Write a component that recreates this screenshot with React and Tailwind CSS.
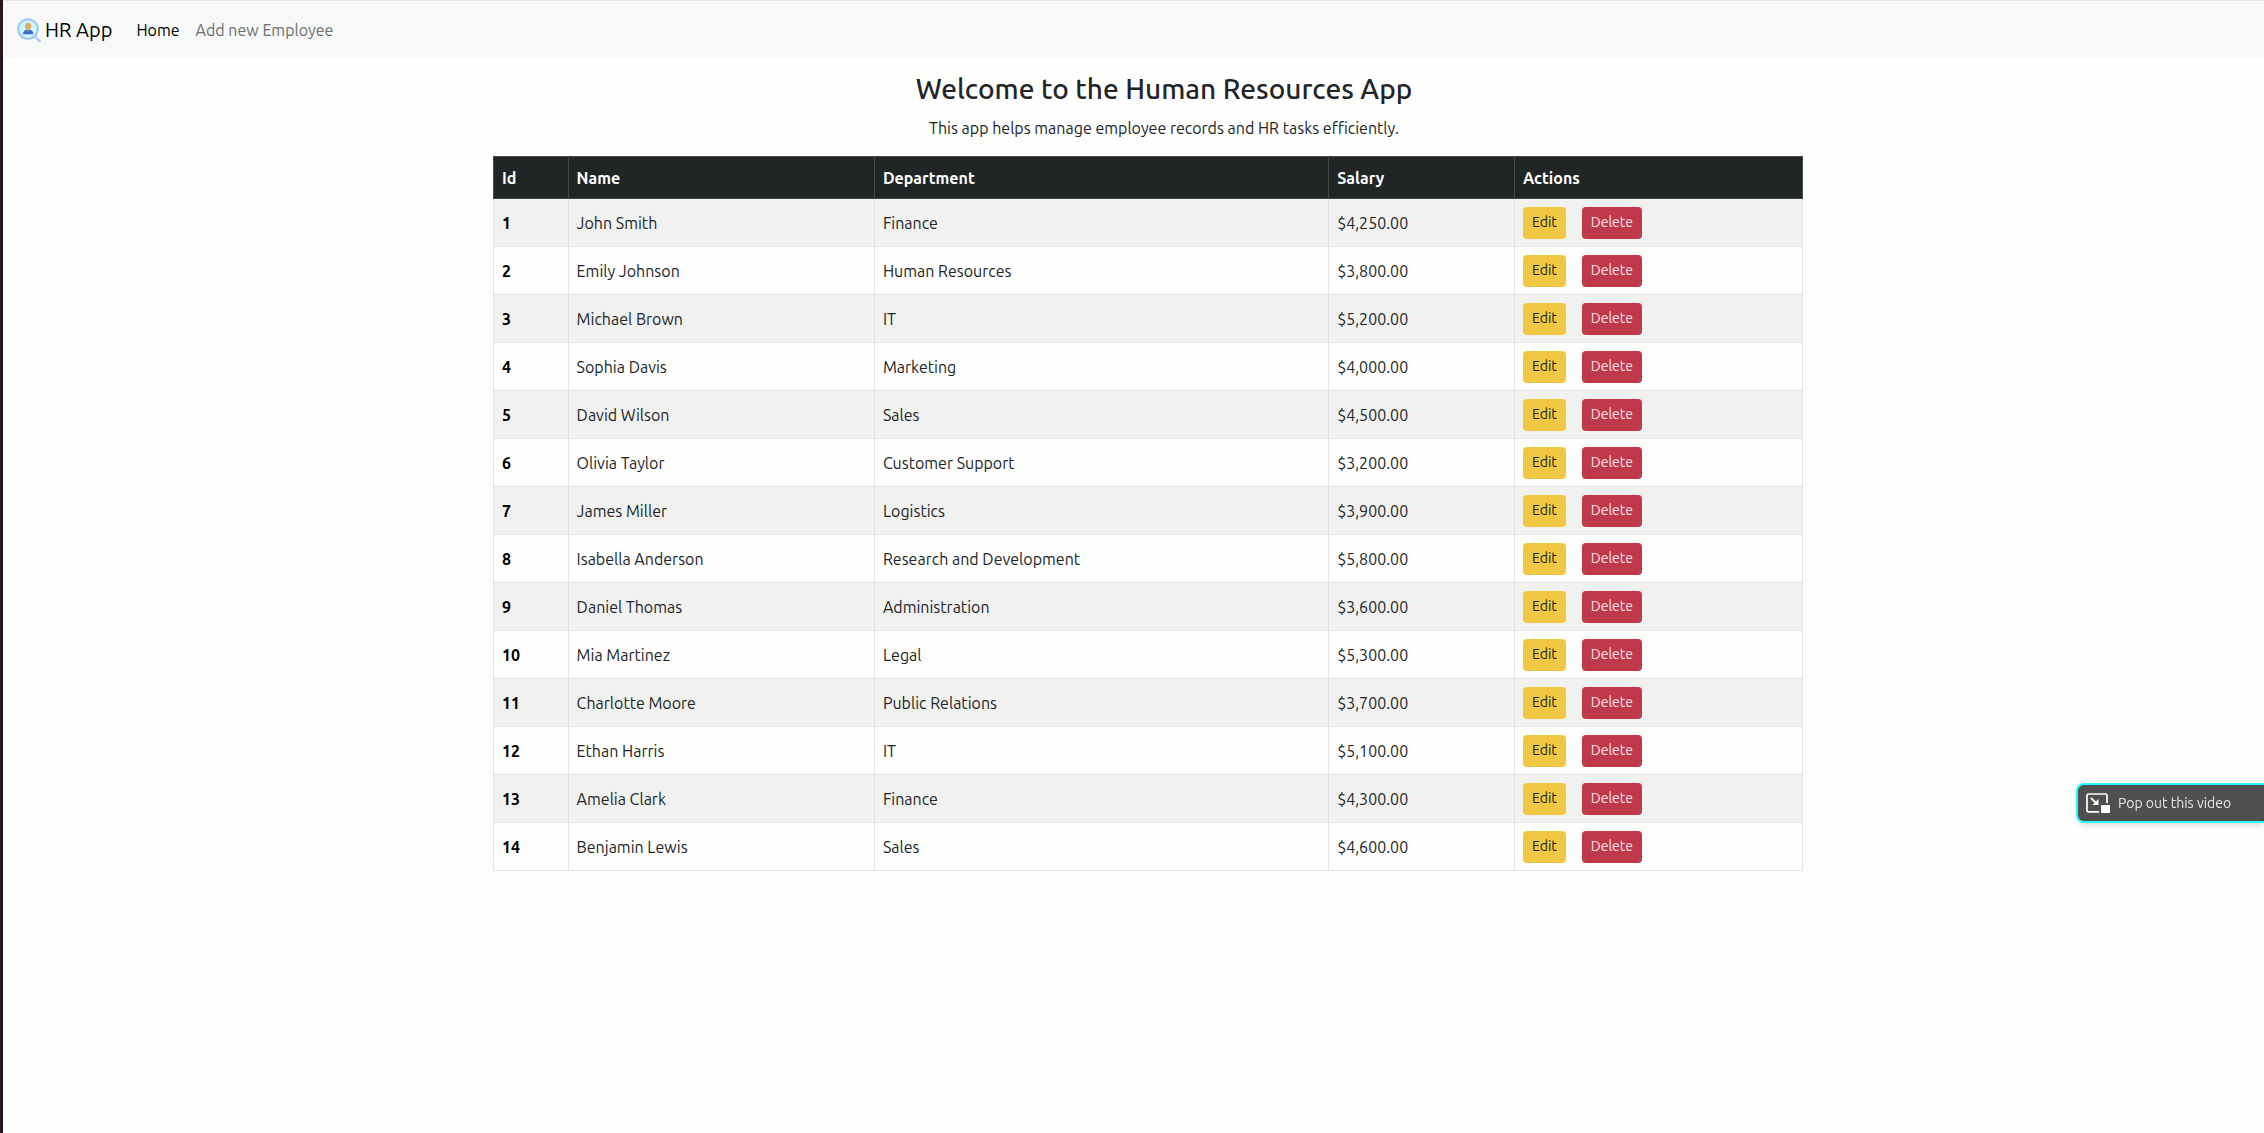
const employees = [
  [1, "John Smith", "Finance", "$4,250.00"],
  [2, "Emily Johnson", "Human Resources", "$3,800.00"],
  [3, "Michael Brown", "IT", "$5,200.00"],
  [4, "Sophia Davis", "Marketing", "$4,000.00"],
  [5, "David Wilson", "Sales", "$4,500.00"],
  [6, "Olivia Taylor", "Customer Support", "$3,200.00"],
  [7, "James Miller", "Logistics", "$3,900.00"],
  [8, "Isabella Anderson", "Research and Development", "$5,800.00"],
  [9, "Daniel Thomas", "Administration", "$3,600.00"],
  [10, "Mia Martinez", "Legal", "$5,300.00"],
  [11, "Charlotte Moore", "Public Relations", "$3,700.00"],
  [12, "Ethan Harris", "IT", "$5,100.00"],
  [13, "Amelia Clark", "Finance", "$4,300.00"],
  [14, "Benjamin Lewis", "Sales", "$4,600.00"],
];

const columns = [
  ["Id", "w-[5.7%]"],
  ["Name", "w-[23.4%]"],
  ["Department", "w-[34.7%]"],
  ["Salary", "w-[14.2%]"],
  ["Actions", "w-[22%]"],
];

function Logo() {
  return (
    <svg className="size-6" viewBox="0 0 24 24" fill="none" aria-hidden="true">
      <path d="M18 18.5l5 5" stroke="#a9c8f3" strokeWidth="2.2" strokeLinecap="round" />
      <circle cx="11" cy="11" r="9.8" fill="#c9f8fd" stroke="#a3c5f5" strokeWidth="2" />
      <path d="M6 16.2c0-3.2 2-4.7 5.2-4.7s5.1 1.5 5.1 4.7z" fill="#3f68cf" />
      <path d="M9.4 11.3h3.6l-1.8 2.4z" fill="#d9a066" />
      <circle cx="11.2" cy="8" r="3.2" fill="#dfac68" />
    </svg>
  );
}

function PopOutIcon() {
  return (
    <svg className="h-5 w-6" viewBox="0 0 24 20" fill="none" aria-hidden="true">
      <path d="M13 18.9H2.5A1.5 1.5 0 0 1 1 17.4V2.5A1.5 1.5 0 0 1 2.5 1h17A1.5 1.5 0 0 1 21 2.5V10" stroke="#fff" strokeWidth="1.7" />
      <path d="M5 5l5.5 5.5" stroke="#fff" strokeWidth="1.8" />
      <path d="M12.500 6v6h-6z" fill="#fff" />
      <rect x="15" y="12" width="9" height="8" rx="1" fill="#fff" />
    </svg>
  );
}

export default function App() {
  return (
    <div className="min-h-screen border-l-3 border-[#2a1524] bg-[#fefffd] font-['Ubuntu','Noto_Sans',sans-serif] text-base leading-6 text-[#212529]">
      <nav className="flex h-[58px] items-center border-t border-[#e4e5e4] bg-[#f7f9f8] pl-[14px]">
        <a href="#home" className="flex items-center gap-1 text-xl text-black">
          <Logo />
          <span>HR App</span>
        </a>
        <a href="#home" className="ml-6 text-black">Home</a>
        <a href="#add" className="ml-4 text-[#6d6f6e]">Add new Employee</a>
      </nav>

      <main className="pl-[61px]">
        <div className="mx-auto max-w-[1342px]">
          <header className="pt-[13px] text-center">
            <h1 className="text-[28px] leading-9 font-medium">Welcome to the Human Resources App</h1>
            <p className="mt-[9px]">This app helps manage employee records and HR tasks efficiently.</p>
          </header>
          <table className="mt-4 w-[calc(100%-32px)] table-fixed border-collapse text-left">
            <thead className="bg-[#212525] text-white">
              <tr className="h-[42px]">
                {columns.map(([label, width]) => (
                  <th key={label} scope="col" className={`${width} border border-[#454949] px-2 font-bold`}>{label}</th>
                ))}
              </tr>
            </thead>
            <tbody>
              {employees.map(([id, name, department, salary]) => (
                <tr key={id} className="h-12 odd:bg-[#f1f1f0]">
                  <th scope="row" className="border border-[#e1e2e1] px-2 font-bold text-black">{id}</th>
                  <td className="border border-[#e1e2e1] px-2">{name}</td>
                  <td className="border border-[#e1e2e1] px-2">{department}</td>
                  <td className="border border-[#e1e2e1] px-2">{salary}</td>
                  <td className="border border-[#e1e2e1] px-2">
                    <div className="flex gap-4 text-sm">
                      <button type="button" className="h-8 rounded-[4px] bg-[#f1c843] px-[9px] pb-px text-[#221f10]">Edit</button>
                      <button type="button" className="h-8 rounded-[4px] bg-[#bf394b] px-[9px] pb-px text-[#fbe3e8]">Delete</button>
                    </div>
                  </td>
                </tr>
              ))}
            </tbody>
          </table>
        </div>
      </main>

      <button type="button" className="fixed top-[783px] right-0 flex h-10 w-[188px] items-center gap-2 rounded-l-lg border-2 border-r-0 border-[#2bf8fa] bg-[#4f4f4f] pl-2 text-sm text-[#e8e8e8] shadow-md">
        <PopOutIcon />
        <span>Pop out this video</span>
      </button>
    </div>
  );
}
